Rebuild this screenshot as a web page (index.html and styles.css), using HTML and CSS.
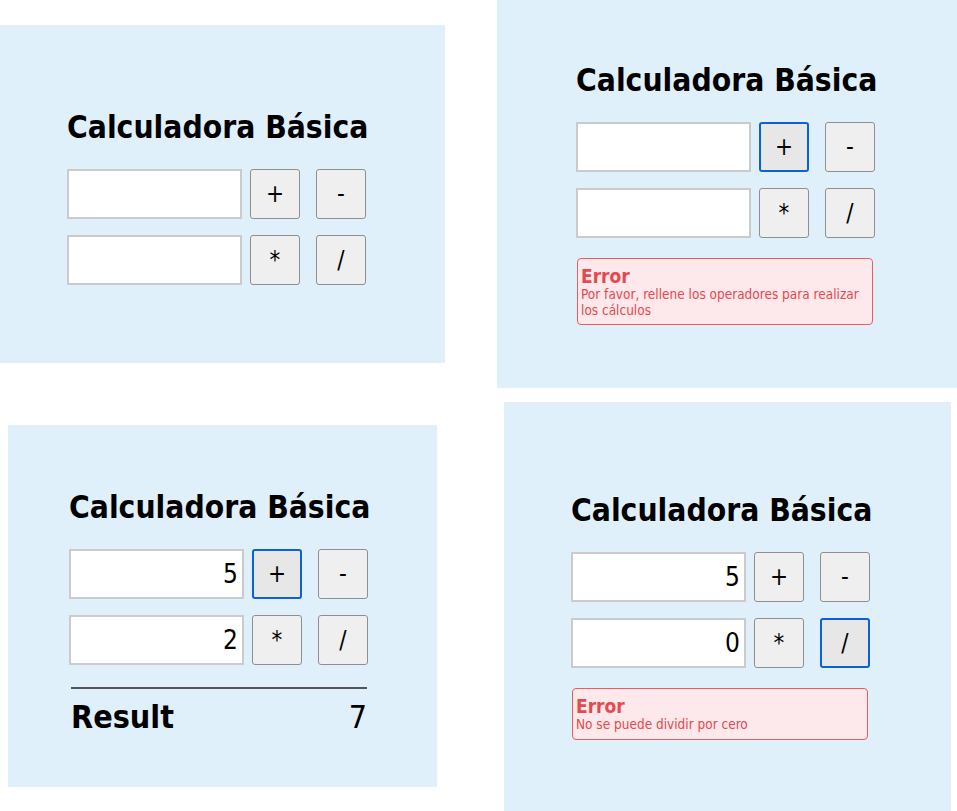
FILE: index.html
```html
<!DOCTYPE html>
<html lang="es">
<head>
<meta charset="utf-8">
<title>Calculadora Básica</title>
<link rel="stylesheet" href="styles.css">
</head>
<body>
<main class="canvas">
  <section class="panel p1">
    <div class="calc">
      <h1 class="title">Calculadora Básica</h1>
      <div class="row">
        <input class="num" type="text" value="">
        <button class="op">+</button>
        <button class="op op-far">-</button>
      </div>
      <div class="row">
        <input class="num" type="text" value="">
        <button class="op">*</button>
        <button class="op op-far">/</button>
      </div>
    </div>
  </section>

  <section class="panel p2">
    <div class="calc">
      <h1 class="title">Calculadora Básica</h1>
      <div class="row">
        <input class="num" type="text" value="">
        <button class="op focused">+</button>
        <button class="op op-far">-</button>
      </div>
      <div class="row">
        <input class="num" type="text" value="">
        <button class="op">*</button>
        <button class="op op-far">/</button>
      </div>
      <div class="error">
        <div class="error-title">Error</div>
        <div class="error-msg">Por favor, rellene los operadores para realizar los cálculos</div>
      </div>
    </div>
  </section>

  <section class="panel p3">
    <div class="calc">
      <h1 class="title">Calculadora Básica</h1>
      <div class="row">
        <input class="num" type="text" value="5">
        <button class="op focused">+</button>
        <button class="op op-far">-</button>
      </div>
      <div class="row">
        <input class="num" type="text" value="2">
        <button class="op">*</button>
        <button class="op op-far">/</button>
      </div>
      <div class="result">
        <span class="result-label">Result</span>
        <span class="result-value">7</span>
      </div>
    </div>
  </section>

  <section class="panel p4">
    <div class="calc">
      <h1 class="title">Calculadora Básica</h1>
      <div class="row">
        <input class="num" type="text" value="5">
        <button class="op">+</button>
        <button class="op op-far">-</button>
      </div>
      <div class="row">
        <input class="num" type="text" value="0">
        <button class="op">*</button>
        <button class="op op-far focused">/</button>
      </div>
      <div class="error">
        <div class="error-title">Error</div>
        <div class="error-msg">No se puede dividir por cero</div>
      </div>
    </div>
  </section>
</main>
</body>
</html>
```

FILE: styles.css
```css
* { box-sizing: border-box; }

html, body {
  margin: 0;
  padding: 0;
  background: #ffffff;
}

body {
  font-family: "DejaVu Sans Condensed", "DejaVu Sans", sans-serif;
  font-stretch: condensed;
  color: #000;
}

.canvas {
  display: grid;
  grid-template-columns: 497px 460px;
  align-items: start;
  justify-items: start;
}

.panel {
  background: #e0f0fb;
}

.p1 { width: 445px; height: 338px; margin-top: 25px; padding: 84px 0 0 67px; }
.p2 { width: 460px; height: 388px; padding: 62px 0 0 79px; }
.p3 { width: 429px; height: 362px; margin: 37px 0 0 8px; padding: 64px 0 0 61px; }
.p4 { width: 447px; height: 409px; margin: 14px 0 0 7px; padding: 90px 0 0 67px; }

.calc {
  width: 299px;
  display: flex;
  flex-direction: column;
}

.title {
  margin: 0 0 24px;
  font-size: 31.5px;
  line-height: 36px;
  font-weight: bold;
  text-align: center;
  white-space: nowrap;
}

.row {
  display: flex;
  gap: 8px;
}

.row + .row { margin-top: 16px; }

.num {
  width: 175px;
  height: 50px;
  margin: 0;
  border: 2px solid #cbcbcb;
  background: #fff;
  padding: 0 4px 0 4px;
  font-family: inherit;
  font-size: 26px;
  text-align: right;
  color: #000;
  outline: none;
}

.op {
  width: 50px;
  height: 50px;
  margin: 0;
  padding: 0;
  border: 1px solid #8f8f8f;
  border-radius: 3px;
  background: #efefef;
  font-family: inherit;
  font-size: 24px;
  color: #000;
  cursor: pointer;
}

.op-far { margin-left: 8px; }

.op.focused {
  border: 2px solid #0b62d6;
  background: #e7e7e7;
}

.error {
  width: 296px;
  margin: 20px 0 0 1px;
  padding: 6px 4px 6px 3px;
  border: 1px solid #e85d5f;
  border-radius: 4px;
  background: #fde8eb;
  color: #e4494e;
}

.error-title {
  font-size: 19px;
  line-height: 22px;
  font-weight: bold;
}

.error-msg {
  font-size: 13.5px;
  line-height: 15.5px;
}

.result {
  width: 296px;
  margin: 22px 0 0 2px;
  padding-top: 9px;
  border-top: 2px solid #555;
  display: flex;
  justify-content: space-between;
  font-size: 32px;
  line-height: 38px;
}

.result-label { font-weight: bold; }
```
